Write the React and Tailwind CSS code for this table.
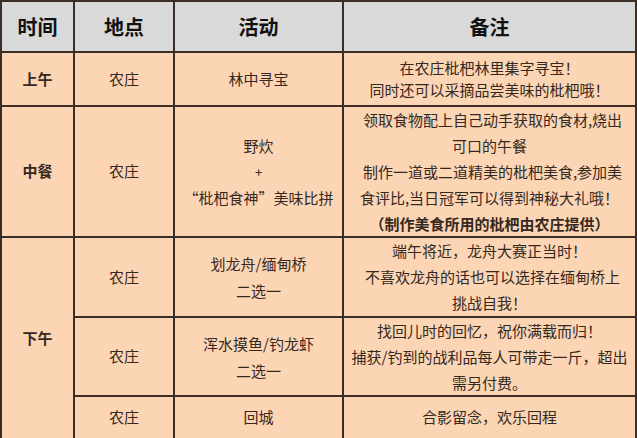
const font = { fontFamily: '"Microsoft YaHei", "Noto Sans CJK SC", "Noto Sans", sans-serif' }

function Cell({ className = '', children }) {
  return (
    <div className={`flex flex-col items-center justify-center text-center bg-[#fcd5b4] text-[#35291f] text-[15px] ${className}`}>
      {children}
    </div>
  )
}

function Head({ children }) {
  return (
    <div className="flex items-center justify-center bg-[#d9d9d9] text-[#111] text-[20px] font-bold">
      {children}
    </div>
  )
}

export default function App() {
  return (
    <div className="w-[637px] h-[438px] overflow-hidden bg-white" style={font}>
      <div
        className="grid gap-[2px] bg-[#3d2e25] pt-[2px] px-[2px]"
        style={{
          gridTemplateColumns: '71px 98px 167px 291px',
          gridTemplateRows: '49px 52px 129px 78px 77px 41px',
        }}
      >
        <Head>时间</Head>
        <Head>地点</Head>
        <Head>活动</Head>
        <Head>备注</Head>

        <Cell className="font-bold">上午</Cell>
        <Cell>农庄</Cell>
        <Cell>林中寻宝</Cell>
        <Cell className="leading-[22px]">
          <div>在农庄枇杷林里集字寻宝！</div>
          <div>同时还可以采摘品尝美味的枇杷哦！</div>
        </Cell>

        <Cell className="font-bold">中餐</Cell>
        <Cell>农庄</Cell>
        <Cell className="leading-[26px]">
          <div>野炊</div>
          <div className="text-[13px]">+</div>
          <div>“枇杷食神”美味比拼</div>
        </Cell>
        <Cell className="leading-[26px]">
          <div className="pl-[6px]">领取食物配上自己动手获取的食材,烧出</div>
          <div>可口的午餐</div>
          <div className="pl-[6px]">制作一道或二道精美的枇杷美食,参加美</div>
          <div>食评比,当日冠军可以得到神秘大礼哦！</div>
          <div className="font-bold">（制作美食所用的枇杷由农庄提供）</div>
        </Cell>

        <Cell className="font-bold row-span-3">下午</Cell>
        <Cell>农庄</Cell>
        <Cell className="leading-[27px]">
          <div>划龙舟/缅甸桥</div>
          <div>二选一</div>
        </Cell>
        <Cell className="leading-[26px]">
          <div>端午将近，龙舟大赛正当时！</div>
          <div className="pl-[6px]">不喜欢龙舟的话也可以选择在缅甸桥上</div>
          <div>挑战自我！</div>
        </Cell>

        <Cell>农庄</Cell>
        <Cell className="leading-[27px]">
          <div>浑水摸鱼/钓龙虾</div>
          <div>二选一</div>
        </Cell>
        <Cell className="leading-[26px]">
          <div>找回儿时的回忆，祝你满载而归！</div>
          <div>捕获/钓到的战利品每人可带走一斤，超出</div>
          <div>需另付费。</div>
        </Cell>

        <Cell>农庄</Cell>
        <Cell>回城</Cell>
        <Cell>合影留念，欢乐回程</Cell>
      </div>
    </div>
  )
}
